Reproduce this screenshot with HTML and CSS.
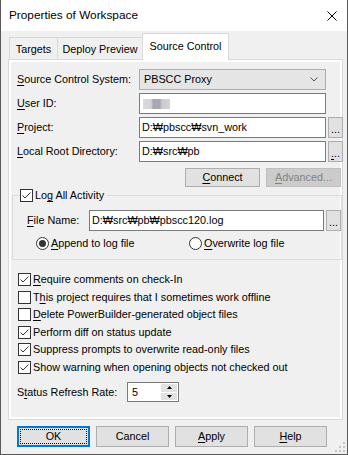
FILE: index.html
```html
<!doctype html>
<html lang="en">
    <head>
        <meta charset="UTF-8" />
        <title>Properties of Workspace</title>
        <link rel="stylesheet" href="styles.css">
    </head>
    <body>
        <div class="window">
            <div class="titlebar">
                <span class="title">Properties of Workspace</span>
                <svg class="close" viewBox="0 0 10 10" width="10" height="10">
                    <path d="M0.5 0.5L9.5 9.5M9.5 0.5L0.5 9.5" />
                </svg>
            </div>

            <div class="client">
                <div class="tabs">
                    <div class="tab tab-targets">Targets</div>
                    <div class="tab tab-deploy">Deploy Preview</div>
                    <div class="tab tab-source active">Source Control</div>
                </div>

                <div class="page">
                    <div class="page-body">
                        <div class="fields">
                            <label><u>S</u>ource Control System:</label>
                            <div class="combo">
                                <span>PBSCC Proxy</span>
                                <svg class="chevron" viewBox="0 0 8 5" width="8" height="5">
                                    <path d="M0.5 0.5L4 4L7.5 0.5" />
                                </svg>
                            </div>
                            <span></span>

                            <label><u>U</u>ser ID:</label>
                            <div class="edit"><span class="blur"></span></div>
                            <span></span>

                            <label><u>P</u>roject:</label>
                            <div class="edit"><span>D:₩pbscc₩svn_work</span></div>
                            <button class="dots"><span>...</span></button>

                            <label><u>L</u>ocal Root Directory:</label>
                            <div class="edit"><span>D:₩src₩pb</span></div>
                            <button class="dots"><span><u>.</u>..</span></button>
                        </div>

                        <div class="actions">
                            <button class="btn"><span><u>C</u>onnect</span></button>
                            <button class="btn disabled"><span><u>A</u>dvanced...</span></button>
                        </div>

                        <fieldset class="group">
                            <legend class="check">
                                <span class="box checked">
                                    <svg viewBox="0 0 11 11" width="11" height="11"><path d="M1.5 5.5L4 8L9.5 2.5" /></svg>
                                </span>
                                <span>Lo<u>g</u> All Activity</span>
                            </legend>
                            <div class="file-row">
                                <label><u>F</u>ile Name:</label>
                                <div class="edit"><span>D:₩src₩pb₩pbscc120.log</span></div>
                                <button class="dots"><span>...</span></button>
                            </div>
                            <div class="radio-row">
                                <span class="radio-item append"><span class="radio on"></span><span><u>A</u>ppend to log file</span></span>
                                <span class="radio-item"><span class="radio"></span><span><u>O</u>verwrite log file</span></span>
                            </div>
                        </fieldset>

                        <div class="checks">
                            <div class="check">
                                <span class="box checked"><svg viewBox="0 0 11 11" width="11" height="11"><path d="M1.5 5.5L4 8L9.5 2.5" /></svg></span>
                                <span><u>R</u>equire comments on check-In</span>
                            </div>
                            <div class="check">
                                <span class="box"></span>
                                <span>T<u>h</u>is project requires that I sometimes work offline</span>
                            </div>
                            <div class="check">
                                <span class="box"></span>
                                <span><u>D</u>elete PowerBuilder-generated object files</span>
                            </div>
                            <div class="check">
                                <span class="box checked"><svg viewBox="0 0 11 11" width="11" height="11"><path d="M1.5 5.5L4 8L9.5 2.5" /></svg></span>
                                <span>Perform diff on status update</span>
                            </div>
                            <div class="check">
                                <span class="box checked"><svg viewBox="0 0 11 11" width="11" height="11"><path d="M1.5 5.5L4 8L9.5 2.5" /></svg></span>
                                <span>Suppress prompts to overwrite read-only files</span>
                            </div>
                            <div class="check">
                                <span class="box checked"><svg viewBox="0 0 11 11" width="11" height="11"><path d="M1.5 5.5L4 8L9.5 2.5" /></svg></span>
                                <span>Show warning when opening objects not checked out</span>
                            </div>
                        </div>

                        <div class="refresh-row">
                            <label>S<u>t</u>atus Refresh Rate:</label>
                            <div class="spin">
                                <span class="spin-value">5</span>
                                <span class="spin-buttons">
                                    <span class="spin-up"><svg viewBox="0 0 5 3" width="5" height="3"><path d="M2.5 0L5 3H0Z" /></svg></span>
                                    <span class="spin-down"><svg viewBox="0 0 5 3" width="5" height="3"><path d="M0 0H5L2.5 3Z" /></svg></span>
                                </span>
                            </div>
                        </div>
                    </div>
                </div>

                <div class="buttons">
                    <button class="btn default"><span class="focus">OK</span></button>
                    <button class="btn"><span>Cancel</span></button>
                    <button class="btn"><span><u>A</u>pply</span></button>
                    <button class="btn"><span><u>H</u>elp</span></button>
                </div>
            </div>

            <svg class="grip" viewBox="0 0 10 10" width="10" height="10">
                <rect x="8" y="0" width="2" height="2" />
                <rect x="4" y="4" width="2" height="2" />
                <rect x="8" y="4" width="2" height="2" />
                <rect x="0" y="8" width="2" height="2" />
                <rect x="4" y="8" width="2" height="2" />
                <rect x="8" y="8" width="2" height="2" />
            </svg>
        </div>
    </body>
</html>
```

FILE: styles.css
```css
/* Reset */
*,
*::before,
*::after {
    margin: 0;
    padding: 0;
    box-sizing: border-box;
}

:root {
    --face: #f0f0f0;
    --btn-face: #e1e1e1;
    --btn-border: #adadad;
    --edit-border: #7a7a7a;
    --tab-border: #d9d9d9;
    --glyph: #333;
}

body {
    width: 348px;
    height: 455px;
    font-family: "Liberation Sans", "DejaVu Sans", "Noto Sans CJK KR", sans-serif;
    font-size: 10.8px;
    line-height: 13px;
    color: #000;
    background: #fff;
    white-space: nowrap;
}

u {
    text-decoration-thickness: 1px;
    text-underline-offset: 1.5px;
}

button {
    font: inherit;
    color: inherit;
}

.window {
    position: relative;
    width: 348px;
    height: 455px;
    border: 1px solid #5a5a5a;
    border-top: none;
    background: var(--face);
    display: flex;
    flex-direction: column;
}

/* Title bar */
.titlebar {
    height: 31px;
    flex: none;
    background: #fff;
    display: flex;
    align-items: center;
    justify-content: space-between;
    padding: 0 10px 0 8px;
}

.title {
    font-size: 11.8px;
}

.close {
    fill: none;
    stroke: #000;
    stroke-width: 1;
}

/* Client area */
.client {
    padding: 2px 4px 0 7px;
}

.tabs {
    position: relative;
    z-index: 1;
    display: flex;
    align-items: flex-end;
    height: 27px;
    padding-left: 1px;
    margin-bottom: -1px;
}

.tab {
    height: 22px;
    margin-bottom: 1px;
    border: 1px solid var(--tab-border);
    border-bottom: none;
    background: var(--face);
    display: flex;
    align-items: center;
    justify-content: center;
    padding-top: 2px;
}

.tab + .tab {
    margin-left: -1px;
}

.tab-targets {
    width: 49px;
}

.tab-deploy {
    width: 86px;
}

.tab-source {
    width: 87px;
}

.tab.active {
    position: relative;
    height: 27px;
    margin-bottom: 0;
    background: #fff;
    padding: 0 0 2px;
}

.page {
    height: 361px;
    border: 1px solid var(--tab-border);
    background: #fff;
    padding: 2px;
}

.page-body {
    height: 100%;
    background: var(--face);
    padding: 7px 0 0 6px;
}

/* Top field grid */
.fields {
    display: grid;
    grid-template-columns: 120px 187px 15px;
    grid-auto-rows: 21px;
    column-gap: 2px;
    row-gap: 3px;
    align-items: center;
}

.combo {
    height: 21px;
    background: #e5e5e5;
    border: 1px solid var(--btn-border);
    display: flex;
    align-items: center;
    justify-content: space-between;
    padding: 0 7px 0 4px;
}

.chevron {
    fill: none;
    stroke: #555;
    stroke-width: 1;
}

.edit {
    height: 21px;
    background: #fff;
    border: 1px solid var(--edit-border);
    display: flex;
    align-items: center;
    padding: 0 2px;
    overflow: hidden;
}

.blur {
    width: 27px;
    height: 10px;
    margin-left: 1px;
    background: linear-gradient(90deg, #dcdcdc 0, #d2d2d4 30%, #a7a7b2 38%, #a9a9b6 62%, #c9c9d0 70%, #d4d4d8 100%);
}

.dots {
    height: 21px;
    width: 15px;
    background: var(--btn-face);
    border: 1px solid var(--btn-border);
    display: flex;
    align-items: flex-end;
    justify-content: center;
    padding-bottom: 3px;
    line-height: 10px;
}

.btn {
    height: 21px;
    background: var(--btn-face);
    border: 1px solid var(--btn-border);
    display: flex;
    align-items: center;
    justify-content: center;
}

.actions {
    display: flex;
    justify-content: flex-end;
    gap: 6px;
    width: 324px;
    margin-top: 6px;
}

.actions .btn {
    width: 75px;
    height: 19px;
}

.btn.disabled {
    background: #cccccc;
    border-color: #bfbfbf;
    color: #838383;
}

/* Log group */
.group {
    width: 330px;
    margin: 2px 0 0 -5px;
    min-width: 0;
    border: 1px solid #dcdcdc;
    padding: 8px 0 9px 7px;
}

.check {
    display: flex;
    align-items: center;
    gap: 2px;
}

legend.check {
    height: 13px;
    line-height: 13px;
    padding-right: 3px;
}

.box {
    width: 13px;
    height: 13px;
    flex: none;
    border: 1px solid var(--glyph);
    background: #fff;
}

.box svg {
    display: block;
    fill: none;
    stroke: var(--glyph);
    stroke-width: 1;
}

.file-row {
    display: flex;
    align-items: center;
    margin-left: 7px;
}

.file-row label {
    width: 62px;
}

.file-row .edit {
    width: 235px;
    margin-right: 2px;
}

.radio-row {
    display: flex;
    align-items: center;
    height: 14px;
    margin-top: 5px;
    padding-left: 16px;
}

.radio-item {
    display: flex;
    align-items: center;
    gap: 2px;
}

.radio-item.append {
    width: 153px;
}

.radio {
    width: 13px;
    height: 13px;
    border: 1px solid var(--glyph);
    border-radius: 50%;
    background: #fff;
    display: flex;
    align-items: center;
    justify-content: center;
}

.radio.on::after {
    content: "";
    width: 7px;
    height: 7px;
    border-radius: 50%;
    background: var(--glyph);
}

/* Option checkboxes */
.checks {
    margin-top: 11px;
    padding-left: 1px;
}

.checks .check {
    height: 17.5px;
}

.refresh-row {
    display: flex;
    align-items: center;
    margin-top: 6px;
}

.refresh-row label {
    width: 110px;
}

.spin {
    width: 52px;
    height: 20px;
    background: #fff;
    border: 1px solid var(--edit-border);
    display: flex;
    justify-content: space-between;
    padding: 1px;
}

.spin-value {
    padding-left: 3px;
    line-height: 16px;
}

.spin-buttons {
    width: 16px;
    display: flex;
    flex-direction: column;
    gap: 1px;
}

.spin-up,
.spin-down {
    flex: 1;
    background: var(--btn-face);
    display: flex;
    align-items: center;
    justify-content: center;
}

.spin-up svg,
.spin-down svg {
    fill: #000;
}

/* Dialog buttons */
.buttons {
    display: flex;
    gap: 6px;
    margin-top: 6px;
    padding-left: 9px;
}

.buttons .btn {
    width: 73px;
}

.btn.default {
    border: 2px solid #0078d7;
    padding: 1px;
}

.btn.default .focus {
    width: 100%;
    height: 100%;
    border: 1px dotted #000;
    display: flex;
    align-items: center;
    justify-content: center;
}

.grip {
    position: absolute;
    right: 2px;
    bottom: 2px;
    fill: #c4c4c4;
}
```
